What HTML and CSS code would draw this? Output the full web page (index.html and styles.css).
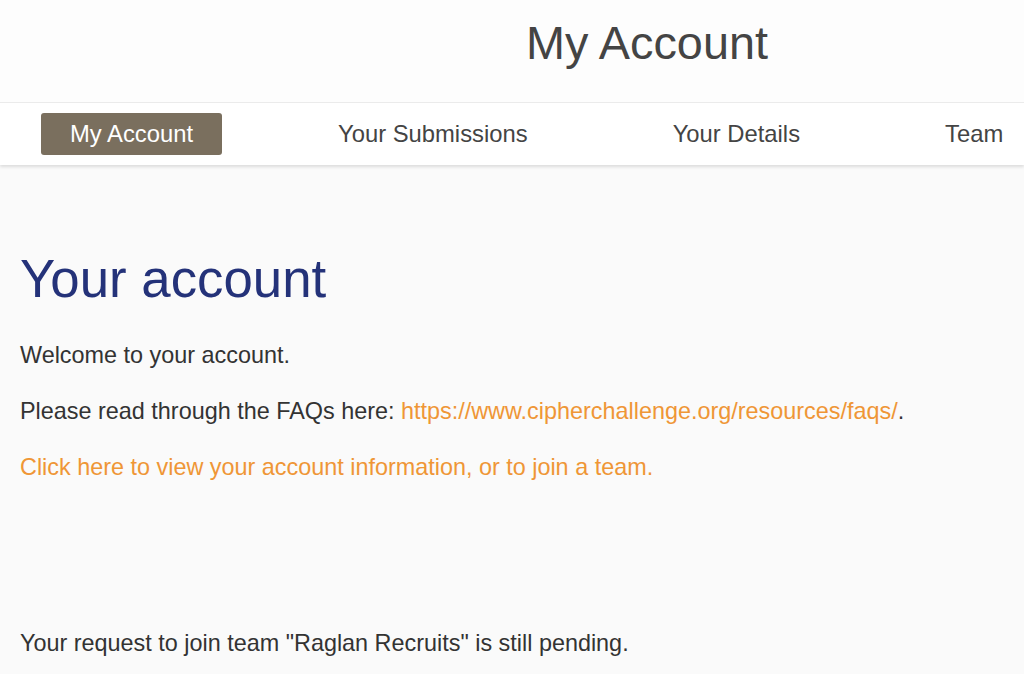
FILE: index.html
```html
<html>
<head>
<meta http-equiv="Content-Type" content="text/html; charset=UTF-8">
<title>My Account</title>
<link rel="stylesheet" href="styles.css">
</head>
<body>
<div id="page_header">
	<h2 class="page_title">My Account</h2>
</div>
<div id="account_nav">
	<a class="nav_item current" href="#">My Account</a>
	<a class="nav_item" href="#">Your Submissions</a>
	<a class="nav_item" href="#">Your Details</a>
	<a class="nav_item" href="#">Team</a>
</div>
<div id="content">
	<h1 class="content_title">Your account</h1>
	<p>Welcome to your account.</p>
	<p>Please read through the FAQs here: <a href="#">https://www.cipherchallenge.org/resources/faqs/</a>.</p>
	<p><a href="#">Click here to view your account information, or to join a team.</a></p>
	<p class="team_status">Your request to join team "Raglan Recruits" is still pending.</p>
</div>
</body>
</html>
```

FILE: styles.css
```css
body{
	margin: 0;
	background: #fafafa;
	font-family: "Liberation Sans", Arial, sans-serif;
	color: #333333;
	overflow: hidden;
}

div#page_header{
	background: #fdfdfd;
	height: 103px;
	border-bottom: 1px solid #ececec;
	box-sizing: border-box;
}

h2.page_title{
	margin: 0 0 0 270px;
	padding-top: 16px;
	text-align: center;
	font-size: 46.8px;
	font-weight: normal;
	color: #444444;
}

div#account_nav{
	display: flex;
	gap: 87px;
	height: 62px;
	padding: 10px 0 0 41px;
	box-sizing: border-box;
	background: #ffffff;
	box-shadow: 0 2px 3px rgba(0, 0, 0, 0.12);
	white-space: nowrap;
	position: relative;
}

a.nav_item{
	display: block;
	height: 42px;
	line-height: 42px;
	padding: 0 29px;
	font-size: 23.8px;
	color: #444444;
	text-decoration: none;
	border-radius: 3px;
	flex-shrink: 0;
}

a.nav_item.current{
	background: #7a6f5e;
	color: #ffffff;
}

div#content{
	padding: 83px 20px 0 20px;
}

h1.content_title{
	margin: 0 0 30px 0;
	font-size: 52.8px;
	font-weight: normal;
	color: #243279;
}

div#content p{
	margin: 0 0 23px 0;
	font-size: 23.4px;
	line-height: 33px;
}

div#content a{
	color: #ef9636;
	text-decoration: none;
}

div#content p.team_status{
	margin-top: 143px;
}
```
